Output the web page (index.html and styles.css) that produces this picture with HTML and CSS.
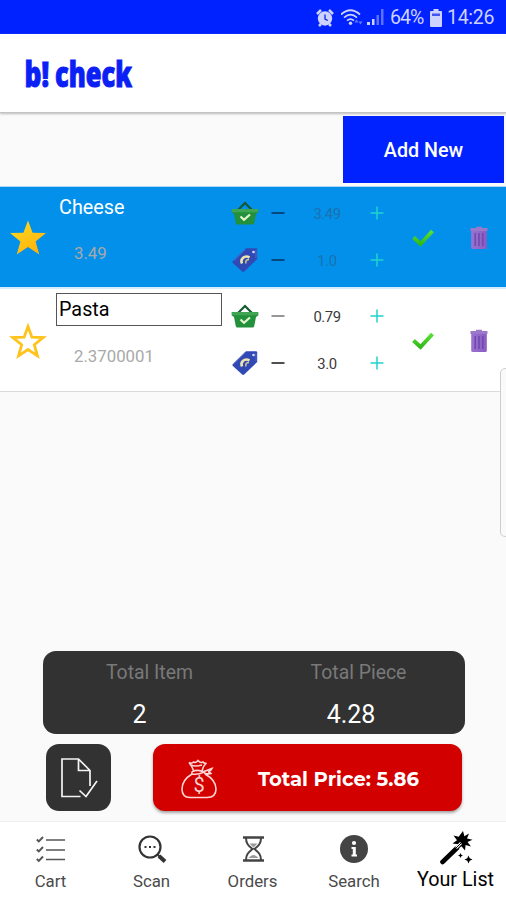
FILE: index.html
```html
<!DOCTYPE html>
<html lang="en">
<head>
<meta charset="utf-8">
<meta name="viewport" content="width=device-width">
<title>b! check</title>
<link rel="stylesheet" href="styles.css">
</head>
<body>
<svg width="0" height="0" class="defs" aria-hidden="true">
  <defs>
    <linearGradient id="gold" x2="0.6" y2="1"><stop stop-color="#ffdc22"/><stop offset="1" stop-color="#ffb30c"/></linearGradient>
    <linearGradient id="green" x2="0" y2="1"><stop stop-color="#5be03a"/><stop offset="1" stop-color="#2fba17"/></linearGradient>
    <linearGradient id="violet" x2="1"><stop stop-color="#9a72d0"/><stop offset="1" stop-color="#8a5cc2"/></linearGradient>
    <symbol id="basket" viewBox="0 0 28 24">
      <path d="M6.5 9.500 14 2l7.500 7.500" fill="none" stroke="#145a30" stroke-width="2.200"/>
      <path d="M.8 8h26.400v3.500L25 13l-1.800 9.200q-.3 1.300-1.600 1.300H6.400q-1.300 0-1.600-1.300L3 13 .8 11.500Z" fill="#23903c"/>
      <path d="M.8 8h26.400v3.300H.8Z" fill="#3fa553"/>
      <path d="m9.500 15.500 3.500 3.300 6-5.300" fill="none" stroke="#e3f5d0" stroke-width="2.200"/>
    </symbol>
    <symbol id="tag" viewBox="0 0 26 26">
      <path d="M14 1.200h10q1.200 0 1.200 1.200V12L12.200 24.600q-1 .9-2 0L.9 16q-.9-1 0-2Z" fill="#3049b4"/>
      <path d="M13 2.800 2 13.700M24 3v8" stroke="#5269c7" fill="none"/>
      <circle cx="21.500" cy="5" r="1.300" fill="#d3ddff"/>
      <path d="M17.500 10.500c-5-2.800-9.500 1.500-7.500 6" fill="none" stroke="#ede6b0" stroke-width="2.600"/>
      <path d="M17 12.500q-4 0-3 4" fill="none" stroke="#cfc98c" stroke-width="1.500"/>
    </symbol>
    <symbol id="check" viewBox="0 0 24 20"><path d="m2.500 10.500 7 6.500L21.500 4" fill="none" stroke="url(#green)" stroke-width="4"/></symbol>
    <symbol id="trash" viewBox="0 0 18 24">
      <path d="M6 2V.8h6V2h5.500v3H.5V2Z" fill="#9a79cb"/>
      <path d="M1.200 5h15.600v16.500q0 1.500-1.500 1.500H2.700q-1.500 0-1.500-1.500Z" fill="url(#violet)"/>
      <path d="M5.200 7v13M9 7v13M12.800 7v13" stroke="#6d45aa" stroke-width="1.400"/>
    </symbol>
    <symbol id="minus" viewBox="0 0 14 14"><path d="M.5 7h13" stroke="currentColor" stroke-width="1.700"/></symbol>
    <symbol id="plus" viewBox="0 0 14 14"><path d="M.5 7h13M7 .5v13" stroke="currentColor" stroke-width="1.500"/></symbol>
  </defs>
</svg>

<header class="status">
  <svg class="alarm" width="18" height="18" viewBox="0 0 18 18">
    <circle cx="9" cy="9.500" r="7.200" fill="currentColor"/>
    <path d="M1 5 5 1M17 5l-4-4M3 17l2-2M15 17l-2-2" stroke="currentColor" stroke-width="2.500"/>
    <path d="M9 5.500V10l2.800 1.500" fill="none" stroke="#0b24ee" stroke-width="1.300"/>
  </svg>
  <svg class="wifi" width="22" height="17" viewBox="0 0 22 17">
    <g fill="none" stroke="currentColor" stroke-width="1.700"><path d="M0 5.500q9.500-8.500 19 0M3 8.700q6.500-6 13 0M6 11.700q3.500-3.200 7 0"/></g>
    <circle cx="9.500" cy="14.300" r="1.700" fill="currentColor"/>
    <path d="m15.500 10.500 2 3h-4ZM19.500 15.500l2-3h-4Z" fill="currentColor" opacity=".5"/>
  </svg>
  <svg class="signal" width="17" height="17" viewBox="0 0 17 17"><path d="M0 16v-3h3v3M5 16v-6h2.500v6" fill="currentColor"/><path d="M9.500 16V6H12v10M14 16V0h2.500v16" fill="currentColor" opacity=".45"/></svg>
  <span class="percent">64%</span>
  <svg class="battery" width="12" height="18" viewBox="0 0 12 18"><path d="M3.500 0h5v2H11q1 0 1 1v14q0 1-1 1H1q-1 0-1-1V3q0-1 1-1h2.500Z" fill="currentColor"/><path d="M2 4.500h8V7H2Z" fill="#4355ee"/></svg>
  <span class="clock">14:26</span>
</header>

<div class="appbar">
  <svg width="116" height="56" viewBox="0 0 116 56">
    <g class="logo"><text x="1.500" y="39" textLength="24.500" lengthAdjust="spacingAndGlyphs">b!</text><text x="32" y="39" textLength="77" lengthAdjust="spacingAndGlyphs">check</text></g>
  </svg>
</div>

<div class="toolbar"><button class="add">Add New</button></div>

<main class="list">
  <section class="row selected">
    <svg class="star" width="38" height="38" viewBox="0 0 38 38"><path d="m19 1.500 4.600 12.200 13.400.4-10.400 8.300 3.700 13L19 28 7.700 35.400l3.700-13L1 14.100l13.400-.4Z" fill="url(#gold)"/></svg>
    <div class="name">Cheese</div>
    <div class="sum">3.49</div>
    <svg class="kind" width="28" height="24"><use href="#basket"/></svg>
    <svg class="minus" width="14" height="14"><use href="#minus"/></svg>
    <span class="value">3.49</span>
    <svg class="plus" width="14" height="14"><use href="#plus"/></svg>
    <svg class="kind" width="26" height="26"><use href="#tag"/></svg>
    <svg class="minus" width="14" height="14"><use href="#minus"/></svg>
    <span class="value">1.0</span>
    <svg class="plus" width="14" height="14"><use href="#plus"/></svg>
    <svg class="done" width="24" height="20"><use href="#check"/></svg>
    <svg class="remove" width="18" height="24"><use href="#trash"/></svg>
  </section>
  <section class="row">
    <svg class="star" width="38" height="38" viewBox="0 0 38 38"><path d="m19 4.500 3.900 10.700 11.300.4-8.900 7.100 3.100 11.100L19 27.500l-9.400 6.300 3.100-11.100-8.900-7.100 11.300-.4Z" fill="none" stroke="#ffc31c" stroke-width="2.800"/></svg>
    <div class="name field">Pasta</div>
    <div class="sum">2.3700001</div>
    <svg class="kind" width="28" height="24"><use href="#basket"/></svg>
    <svg class="minus faded" width="14" height="14"><use href="#minus"/></svg>
    <span class="value">0.79</span>
    <svg class="plus" width="14" height="14"><use href="#plus"/></svg>
    <svg class="kind" width="26" height="26"><use href="#tag"/></svg>
    <svg class="minus" width="14" height="14"><use href="#minus"/></svg>
    <span class="value">3.0</span>
    <svg class="plus" width="14" height="14"><use href="#plus"/></svg>
    <svg class="done" width="24" height="20"><use href="#check"/></svg>
    <svg class="remove" width="18" height="24"><use href="#trash"/></svg>
  </section>
  <div class="edge-handle"></div>
</main>

<section class="totals">
  <div class="total items"><span class="label">Total Item</span><span class="amount">2</span></div>
  <div class="total pieces"><span class="label">Total Piece</span><span class="amount">4.28</span></div>
</section>

<section class="actions">
  <button class="save" aria-label="Save list">
    <svg width="38" height="42" viewBox="0 0 38 42" fill="none" stroke="#f4f4f4" stroke-width="1.700">
      <path d="M20.500 39.500H2V2h16.500L30 13.500v15.500M18.500 2v11.500H30"/><path d="m19.500 33.500 6.500 6L37 24"/>
    </svg>
  </button>
  <button class="price">
    <svg width="38" height="40" viewBox="0 0 38 40" fill="none" stroke="#ffd5d5" stroke-width="1.600">
      <path d="M14 12.500Q12 7 9 3.500q2.500 1.500 4.500-.5 2 1.500 4.500-1.500 2.500 3 5 1.500 1.500 2 3.500 1Q22 8 22.500 12.500M12.500 12.500Q18 10 24 13q-6 3-11.500 2Q11 14 12.500 12.500ZM24 12.500q4-1.500 8-3-1 2.500-4 3.500 2 0 3 1.500-3 1-7-.5M12 15Q2 21 2 30q0 8.500 8 8.500h17q9 0 9-8.500 0-9-11-15"/>
      <path d="M11 6q4 2 11 0"/>
      <text class="coin" x="19" y="33" text-anchor="middle">$</text>
    </svg>
    <span>Total Price: 5.86</span>
  </button>
</section>

<nav class="tabs">
  <a class="tab">
    <svg width="30" height="28" viewBox="0 0 30 28" fill="none" stroke="#555"><path d="M10 5h19M10 15h19M10 24.500h19" stroke-width="1.400"/><path d="m.8 4.500 2 2L7 2M.8 14.500l2 2L7 12M.8 24l2 2L7 21.500" stroke-width="1.900"/></svg>
    <span>Cart</span>
  </a>
  <a class="tab">
    <svg width="30" height="28" viewBox="0 0 30 28" fill="none" stroke="#333"><circle cx="13" cy="12" r="10.500" stroke-width="2.200"/><path d="m20.500 19.500 2 2" stroke-width="2"/><path d="m22 21 6 5.500" stroke-width="4"/><path d="M7.500 12h2m2.500 0h2m2.500 0h2" stroke-width="2"/></svg>
    <span>Scan</span>
  </a>
  <a class="tab">
    <svg width="30" height="28" viewBox="0 0 30 28" fill="none" stroke="#444"><path d="M5 2.500h21M5 25.500h21" stroke-width="2.400"/><path d="M8 3c0 6 3 8 6.500 11-3.500 3-6.500 5-6.500 11M23 3c0 6-3 8-6.500 11 3.500 3 6.500 5 6.500 11" stroke-width="2"/><path d="M11.500 8.500h8l-4 4ZM10.500 23q5-6 10 0Z" fill="#999" stroke="none"/></svg>
    <span>Orders</span>
  </a>
  <a class="tab">
    <svg width="30" height="28" viewBox="0 0 30 28"><circle cx="15" cy="14" r="14" fill="#444"/><circle cx="15" cy="8" r="2.100" fill="#fff"/><path d="M12.500 12h4.300v7.500h1.200V21.500h-5.500v-2h1.300V14h-1.300Z" fill="#fff"/></svg>
    <span>Search</span>
  </a>
  <a class="tab active">
    <svg width="34" height="34" viewBox="0 0 34 34"><path d="M3.500 31 18 17" stroke="#000" stroke-width="4.600" stroke-linecap="round"/><path d="m24 0 1.400 5.200L30 2.500l-2 5 5.500 1.300-5 2.200 3.500 4.500-5.400-1.500-.6 5.500-3.500-4.300-4 3 .5-5-5.500-.7 4.500-3.300L14.500 4.500l5.200 1.200Z"/><path d="m17 17 5-5" stroke="#fff" stroke-width="2.600"/><path d="m16.500 17.500 5.500-5.500" stroke="#000" stroke-width="1"/><path d="m29.500 24.500 1.200 2.800 2.800 1.200-2.800 1.200-1.200 2.800-1.200-2.800-2.800-1.200 2.800-1.200Z"/><path d="m21.500 22 .8 1.700 1.700.8-1.700.8-.8 1.700-.8-1.700-1.700-.8 1.700-.8Z"/></svg>
    <span>Your List</span>
  </a>
</nav>
</body>
</html>
```
FILE: styles.css
```css
* { box-sizing: border-box; }
body {
  margin: 0;
  width: 506px;
  height: 900px;
  overflow: hidden;
  display: flex;
  flex-direction: column;
  background: #fafafa;
  font-family: Roboto, "Liberation Sans", sans-serif;
}
svg { display: block; flex: none; }
.defs { position: absolute; }
button { border: 0; padding: 0; font: inherit; color: #fff; }

.status {
  height: 34px;
  flex: none;
  display: flex;
  align-items: center;
  justify-content: flex-end;
  padding: 1px 12px 0 0;
  background: #0022ff;
  color: #ccd3ff;
  font-size: 19.500px;
}
.wifi { margin-left: 7px; }
.signal { margin-left: 4px; }
.percent { width: 34px; margin-left: 6px; letter-spacing: -0.9px; }
.battery { margin-left: 6px; }
.clock { width: 47px; margin-left: 5px; white-space: nowrap; letter-spacing: -0.3px; }

.appbar {
  height: 79px;
  flex: none;
  padding: 14px 0 0 23px;
  background: #fff;
  border-bottom: 1px solid #c4c4c4;
  box-shadow: 0 1px 2px #bbb;
}
.logo {
  fill: #0b20f5;
  stroke: #0b20f5;
  stroke-width: 1px;
  font: 800 36px "Open Sans", sans-serif;
}

.toolbar {
  height: 73px;
  flex: none;
  display: flex;
  justify-content: flex-end;
  padding: 3px 2px 3px 0;
}
.add {
  width: 161px;
  height: 67px;
  padding-top: 1px;
  background: #0022ff;
  font-size: 19.700px;
  font-weight: 500;
}

.list { position: relative; flex: none; height: 460px; }
.row {
  display: grid;
  grid-template-columns: 56px 166px 45px 22px 76px 24px 68px 44px;
  grid-template-rows: 47px 47px;
  place-items: center;
  height: 103px;
  padding-top: 4px;
  background: #fff;
  border-bottom: 1px solid #dadada;
}
.selected {
  background: #0290ea;
  border-top: 1px solid #a9d7f5;
  border-bottom: 2px solid #d5ecfa;
  padding-top: 3px;
}
.star { grid-column: 1; grid-row: 1 / 3; margin-top: 1px; }
.name {
  grid-column: 2;
  grid-row: 1;
  justify-self: stretch;
  align-self: start;
  height: 33px;
  padding-left: 3px;
  line-height: 35px;
  font-size: 19.800px;
  color: #000;
}
.name.field { border: 1.500px solid #555; line-height: 32px; padding-left: 2px; }
.selected .name { color: #fff; }
.sum {
  grid-column: 2;
  grid-row: 2;
  justify-self: start;
  padding-left: 18px;
  margin-top: -16px;
  font-size: 16.800px;
  color: #a9a9a9;
}
.minus { color: #303030; }
.minus.faded { color: #858585; }
.selected .minus { color: #083c68; }
.value { font-size: 14.800px; letter-spacing: -0.4px; color: #3a3a3a; }
.selected .value { color: #1a72b0; }
.plus { color: #21d3cb; }
.kind { grid-column: 3; }
.kind, .minus, .plus { margin-top: -1px; }
.done { grid-column: 7; grid-row: 1 / 3; }
.remove { grid-column: 8; grid-row: 1 / 3; margin-top: 1px; }
.edge-handle {
  position: absolute;
  right: -4px;
  top: 182px;
  width: 10px;
  height: 169px;
  border: 1px solid #cecece;
  border-radius: 5px;
  background: #fafafa;
}

.totals {
  flex: none;
  display: grid;
  grid-template-columns: 213px 205px;
  width: 422px;
  height: 83px;
  margin: 5px 0 0 43px;
  border-radius: 13px;
  background: #323232;
}
.total { display: flex; flex-direction: column; align-items: center; padding-top: 10px; }
.label { font-size: 19.400px; line-height: 24px; color: #797979; }
.amount { margin-top: 15px; font-size: 25px; line-height: 30px; color: #fff; }
.items .amount { margin-right: 20px; }
.pieces .amount { margin-right: 15px; }

.actions {
  flex: none;
  display: flex;
  gap: 42px;
  padding: 10px 0 0 46px;
  height: 87px;
}
.save, .price { height: 67px; display: flex; align-items: center; }
.save { width: 65px; justify-content: center; border-radius: 13px; background: #323232; }
.price {
  width: 309px;
  padding: 2px 0 0 27px;
  gap: 40px;
  border-radius: 12px;
  background: #d30000;
  box-shadow: 0 2px 3px rgba(0, 0, 0, 0.35);
  font: 700 19.600px Montserrat, "Open Sans", sans-serif;
  white-space: nowrap;
}
.price span { padding-top: 1px; }
.coin { font: 20px Roboto, sans-serif; fill: #ffd5d5; stroke: none; }

.tabs {
  flex: 1;
  display: grid;
  grid-template-columns: 101px 101px 101px 102px 101px;
  background: #fff;
  border-top: 1px solid #f0f0f0;
}
.tab {
  display: flex;
  flex-direction: column;
  align-items: center;
  padding-top: 13px;
  font-size: 16.800px;
  line-height: 20px;
  color: #4a4a4a;
}
.tab span { margin-top: 8px; white-space: nowrap; }
.active { padding-top: 9px; font-size: 19.800px; color: #000; }
.active span { margin-top: 5px; }
```
